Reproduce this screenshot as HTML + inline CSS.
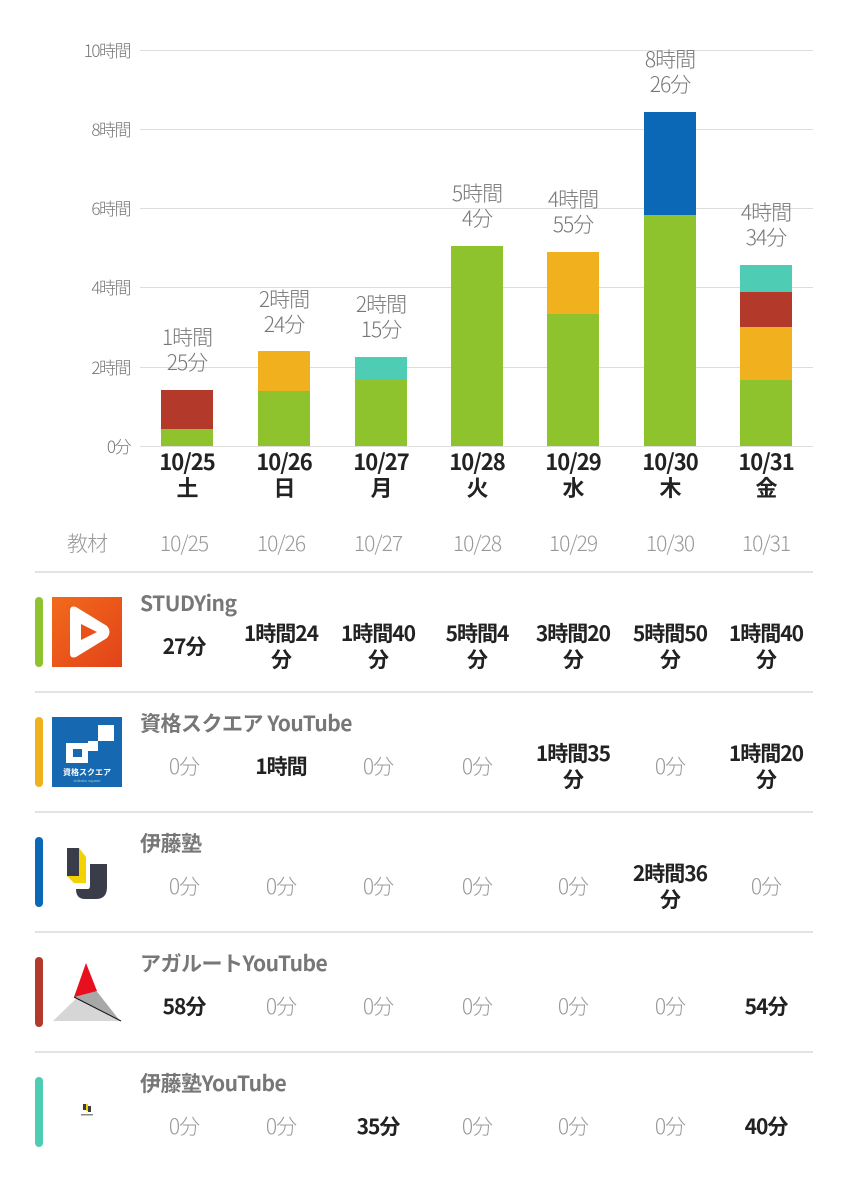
<!DOCTYPE html>
<html><head><meta charset="utf-8"><style>
*{margin:0;padding:0;box-sizing:border-box}
body{width:848px;height:1200px;background:#fff;position:relative;overflow:hidden;font-family:"Noto Sans CJK JP","Liberation Sans",sans-serif;}
.a{position:absolute}
.g{position:absolute;left:140px;width:673px;height:1px;background:#ddd}
.yl{position:absolute;right:718px;font-size:17px;color:#777;letter-spacing:-1.5px;line-height:18px;font-weight:300}
.bar{position:absolute;width:52px}
.lb{position:absolute;width:120px;text-align:center;font-size:21px;color:#777;line-height:25px;letter-spacing:-1px;font-weight:300}
.xl{position:absolute;width:120px;text-align:center;font-size:22px;font-weight:bold;color:#222;line-height:26px;top:448px;letter-spacing:-1px}
.th{position:absolute;top:529px;width:120px;text-align:center;font-size:21px;color:#999;letter-spacing:-1px;line-height:28px;font-weight:300}
.hl{position:absolute;left:35px;width:778px;height:2px;background:#e3e3e3}
.cb{position:absolute;left:35px;width:8px;height:70px;border-radius:4px}
.nm{position:absolute;left:140px;font-size:21px;font-weight:bold;color:#777;line-height:24px;letter-spacing:-0.5px}
.v{position:absolute;width:120px;text-align:center;font-size:21px;line-height:26px;letter-spacing:-1px}
.b{font-weight:bold;color:#222}
.z{color:#999;font-weight:300}
</style></head><body>
<div class="g" style="top:50px"></div><div class="g" style="top:129px"></div><div class="g" style="top:208px"></div><div class="g" style="top:287px"></div><div class="g" style="top:367px"></div><div class="g" style="top:446px"></div>
<div class="yl" style="top:41px">10時間</div><div class="yl" style="top:120px">8時間</div><div class="yl" style="top:199px">6時間</div><div class="yl" style="top:278px">4時間</div><div class="yl" style="top:358px">2時間</div><div class="yl" style="top:437px">0分</div>

<div class="bar" style="left:161px;top:390px;height:39px;background:#b33a2a"></div><div class="bar" style="left:161px;top:429px;height:17px;background:#8fc32e"></div>
<div class="bar" style="left:258px;top:351px;height:40px;background:#f1b11f"></div><div class="bar" style="left:258px;top:391px;height:55px;background:#8fc32e"></div>
<div class="bar" style="left:355px;top:357px;height:23px;background:#4ecdb4"></div><div class="bar" style="left:355px;top:380px;height:66px;background:#8fc32e"></div>
<div class="bar" style="left:451px;top:246px;height:200px;background:#8fc32e"></div>
<div class="bar" style="left:547px;top:252px;height:62px;background:#f1b11f"></div><div class="bar" style="left:547px;top:314px;height:132px;background:#8fc32e"></div>
<div class="bar" style="left:644px;top:112px;height:103px;background:#0a68b6"></div><div class="bar" style="left:644px;top:215px;height:231px;background:#8fc32e"></div>
<div class="bar" style="left:740px;top:265px;height:27px;background:#4ecdb4"></div><div class="bar" style="left:740px;top:292px;height:35px;background:#b33a2a"></div><div class="bar" style="left:740px;top:327px;height:53px;background:#f1b11f"></div><div class="bar" style="left:740px;top:380px;height:66px;background:#8fc32e"></div>

<div class="lb" style="left:127px;top:325px">1時間<br>25分</div>
<div class="lb" style="left:224px;top:287px">2時間<br>24分</div>
<div class="lb" style="left:321px;top:292px">2時間<br>15分</div>
<div class="lb" style="left:417px;top:181px">5時間<br>4分</div>
<div class="lb" style="left:513px;top:187px">4時間<br>55分</div>
<div class="lb" style="left:610px;top:47px">8時間<br>26分</div>
<div class="lb" style="left:706px;top:200px">4時間<br>34分</div>

<div class="xl" style="left:127px">10/25<br>土</div><div class="xl" style="left:224px">10/26<br>日</div><div class="xl" style="left:321px">10/27<br>月</div><div class="xl" style="left:417px">10/28<br>火</div><div class="xl" style="left:513px">10/29<br>水</div><div class="xl" style="left:610px">10/30<br>木</div><div class="xl" style="left:706px">10/31<br>金</div>

<div class="th" style="left:27px">教材</div>
<div class="th" style="left:124px">10/25</div><div class="th" style="left:221px">10/26</div><div class="th" style="left:318px">10/27</div><div class="th" style="left:417px">10/28</div><div class="th" style="left:513px">10/29</div><div class="th" style="left:610px">10/30</div><div class="th" style="left:706px">10/31</div>

<div class="hl" style="top:571px"></div><div class="hl" style="top:691px"></div><div class="hl" style="top:811px"></div><div class="hl" style="top:931px"></div><div class="hl" style="top:1051px"></div>

<!-- row1 -->
<div class="cb" style="top:597px;background:#8fc32e"></div>
<svg class="a" style="left:52px;top:597px" width="70" height="70"><defs><linearGradient id="o" x1="0" y1="0" x2="1" y2="1"><stop offset="0" stop-color="#f26a1b"/><stop offset="1" stop-color="#e2431a"/></linearGradient></defs><rect width="70" height="70" fill="url(#o)"/><path d="M18 14 Q18 8 24 10 L55 29 Q60 35 55 41 L24 60 Q18 62 18 56 Z" fill="#fff"/><path d="M29 27 L45 35 L29 43Z" fill="#e8511a"/></svg>
<div class="nm" style="top:591px">STUDYing</div>
<div class="v b" style="left:124px;top:633px">27分</div>
<div class="v b" style="left:221px;top:620px">1時間24<br>分</div>
<div class="v b" style="left:318px;top:620px">1時間40<br>分</div>
<div class="v b" style="left:417px;top:620px">5時間4<br>分</div>
<div class="v b" style="left:513px;top:620px">3時間20<br>分</div>
<div class="v b" style="left:610px;top:620px">5時間50<br>分</div>
<div class="v b" style="left:706px;top:620px">1時間40<br>分</div>

<!-- row2 -->
<div class="cb" style="top:717px;background:#f1b11f"></div>
<svg class="a" style="left:52px;top:717px" width="70" height="70"><rect width="70" height="70" fill="#1668b0"/><rect x="46" y="8" width="16" height="16" fill="#fff"/><rect x="36" y="24" width="10" height="10" fill="#fff"/><rect x="14" y="26" width="22" height="20" fill="#fff"/><rect x="21" y="32" width="9" height="8" fill="#1668b0"/><text x="35" y="58" font-size="8" fill="#fff" text-anchor="middle" font-weight="bold" font-family="Noto Sans CJK JP">資格スクエア</text><text x="35" y="65" font-size="4" fill="#9cc" text-anchor="middle" font-family="Liberation Sans">shikaku square</text></svg>
<div class="nm" style="top:711px">資格スクエア YouTube</div>
<div class="v z" style="left:124px;top:753px">0分</div>
<div class="v b" style="left:221px;top:753px">1時間</div>
<div class="v z" style="left:318px;top:753px">0分</div>
<div class="v z" style="left:417px;top:753px">0分</div>
<div class="v b" style="left:513px;top:740px">1時間35<br>分</div>
<div class="v z" style="left:610px;top:753px">0分</div>
<div class="v b" style="left:706px;top:740px">1時間20<br>分</div>

<!-- row3 -->
<div class="cb" style="top:837px;background:#0a68b6"></div>
<svg class="a" style="left:52px;top:837px" width="70" height="70"><rect x="15" y="11" width="12" height="28" fill="#3a3c4a"/><path d="M27 11 L34 20 L34 46 L27 39Z" fill="#f2d200"/><path d="M15 39 L27 39 L34 46 L22 46Z" fill="#f2d200"/><path d="M38 27 L55 27 L55 50 Q55 62 44 62 L33 62 Q24 62 24 52 L36 52 Q38 52 38 48 Z" fill="#3a3c4a"/></svg>
<div class="nm" style="top:831px">伊藤塾</div>
<div class="v z" style="left:124px;top:873px">0分</div>
<div class="v z" style="left:221px;top:873px">0分</div>
<div class="v z" style="left:318px;top:873px">0分</div>
<div class="v z" style="left:417px;top:873px">0分</div>
<div class="v z" style="left:513px;top:873px">0分</div>
<div class="v b" style="left:610px;top:860px">2時間36<br>分</div>
<div class="v z" style="left:706px;top:873px">0分</div>

<!-- row4 -->
<div class="cb" style="top:957px;background:#b33a2a"></div>
<svg class="a" style="left:52px;top:957px" width="70" height="70"><path d="M1 64 L39 27 L68 64Z" fill="#d6d6d6"/><path d="M39 27 L68 64 L22 40Z" fill="#a8a8a8"/><path d="M34 6 L22 40 L45 34Z" fill="#e8101e"/><path d="M22 40 L69 64" stroke="#111" stroke-width="1"/></svg>
<div class="nm" style="top:951px">アガルートYouTube</div>
<div class="v b" style="left:124px;top:993px">58分</div>
<div class="v z" style="left:221px;top:993px">0分</div>
<div class="v z" style="left:318px;top:993px">0分</div>
<div class="v z" style="left:417px;top:993px">0分</div>
<div class="v z" style="left:513px;top:993px">0分</div>
<div class="v z" style="left:610px;top:993px">0分</div>
<div class="v b" style="left:706px;top:993px">54分</div>

<!-- row5 -->
<div class="cb" style="top:1077px;background:#4ecdb4"></div>
<svg class="a" style="left:52px;top:1077px" width="70" height="70"><rect x="31" y="27" width="3" height="6" fill="#3a3c4a"/><rect x="34" y="27" width="2" height="7" fill="#f2d200"/><rect x="36" y="29" width="3" height="6" fill="#3a3c4a"/><rect x="29" y="37" width="12" height="1.5" fill="#888"/></svg>
<div class="nm" style="top:1071px">伊藤塾YouTube</div>
<div class="v z" style="left:124px;top:1113px">0分</div>
<div class="v z" style="left:221px;top:1113px">0分</div>
<div class="v b" style="left:318px;top:1113px">35分</div>
<div class="v z" style="left:417px;top:1113px">0分</div>
<div class="v z" style="left:513px;top:1113px">0分</div>
<div class="v z" style="left:610px;top:1113px">0分</div>
<div class="v b" style="left:706px;top:1113px">40分</div>
</body></html>
